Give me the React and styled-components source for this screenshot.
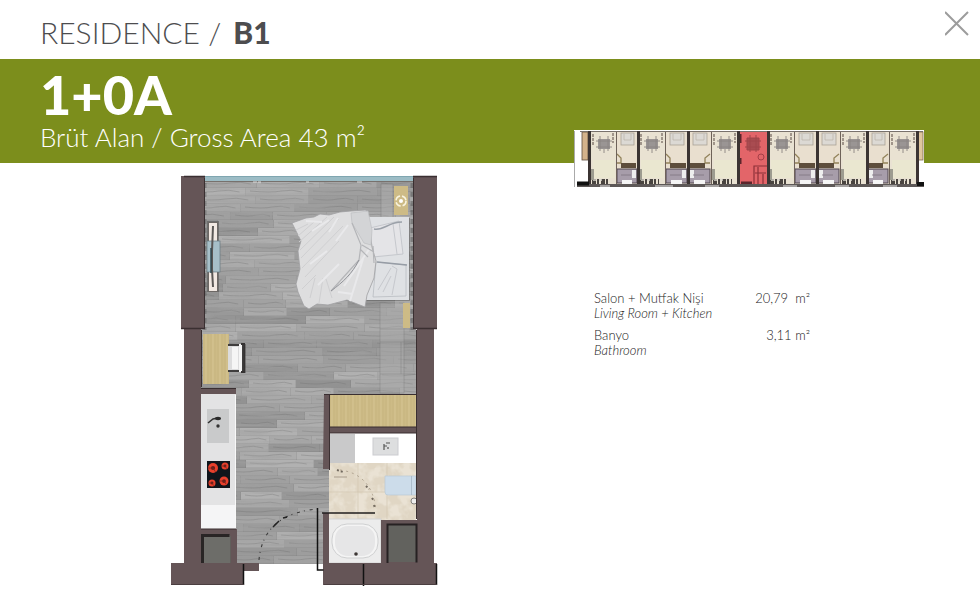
import React from "react";
import styled, { createGlobalStyle } from "styled-components";

const GlobalStyle = createGlobalStyle`
  *, *::before, *::after { box-sizing: border-box; }
  body { margin: 0; background: #fff; overflow-x: hidden; }
  body, button, table { font-family: "Lato", "Liberation Sans", sans-serif; }
`;

const Page = styled.div`
  color: #4a4a4c;
`;

const TopBar = styled.header`
  display: flex;
  align-items: flex-start;
  justify-content: space-between;
  padding: 8px 7px 0 40px;
  height: 59px;
`;

const Crumb = styled.p`
  margin: 4px 0 0;
  font-size: 30px;
  line-height: 40px;
  font-weight: 300;
  color: #4d4d4f;
  white-space: nowrap;

  b { font-weight: 900; margin-left: 4px; }
`;

const CloseButton = styled.button`
  display: flex;
  padding: 0 4px;
  border: 0;
  background: none;
  cursor: pointer;
`;

const Columns = styled.div`
  display: grid;
  grid-template-columns: minmax(0, 1fr) 406px;
`;

const Banner = styled(Columns)`
  background: #7c8e1c;
  color: #fff;
  height: 104px;
`;

const BannerText = styled.div`
  padding: 3px 0 0 40px;
  white-space: nowrap;
`;

const UnitName = styled.h1`
  margin: 0;
  font-size: 54px;
  line-height: 66px;
  font-weight: 900;
`;

const GrossArea = styled.p`
  margin: -7px 0 0;
  font-size: 26px;
  line-height: 32px;
  font-weight: 300;
`;

const KeyPlan = styled.svg`
  display: block;
  align-self: end;
  width: 350px;
  margin-bottom: -25px;
`;

const Details = styled(Columns)`
  padding-top: 12px;
`;

const PlanArea = styled.div`
  padding-left: 170px;
`;

const FloorPlan = styled.svg`
  display: block;
  width: 100%;
  max-width: 268px;
`;

const Rooms = styled.table`
  align-self: start;
  justify-self: start;
  width: 216px;
  margin: 116px 0 0 20px;
  border-collapse: collapse;
  font-size: 13px;
  line-height: 15px;
  font-weight: 300;
  white-space: nowrap;
  color: #222;

  th, td { padding: 0 0 7px; vertical-align: top; }
  th { text-align: left; font-weight: 300; }
  td { text-align: right; white-space: pre; }
  i { display: block; }
`;

const WALL = "#655557";
const EDGE = "#3a2f31";
const WOOD = "#cdbb86";

const seeded = (seed) => () => {
  seed = (seed * 16807) % 2147483647;
  return seed / 2147483647;
};

const random = seeded(4711);
const planks = [];
for (let y = 180; y < 566; y += 8) {
  let x = 196 - Math.floor(random() * 40);
  while (x < 420) {
    const w = 40 + Math.floor(random() * 34);
    const g = 146 + Math.floor(random() * 32);
    planks.push({ x, y, w, fill: `rgb(${g},${g},${g})` });
    x += w;
  }
}

function WoodFloor() {
  return (
    <g clipPath="url(#floor)">
      {planks.map((p, i) => (
        <g key={i}>
          <rect x={p.x} y={p.y} width={p.w} height="8" fill={p.fill} />
          <path
            d={`M${p.x} ${p.y + 8}h${p.w}v-8M${p.x + 4} ${p.y + 3}q${p.w / 3} 2 ${p.w / 2} 0t${p.w / 3} 1`}
            fill="none" stroke="#6c6c6c" strokeWidth=".8" opacity=".4"
          />
        </g>
      ))}
      <rect x="200" y="178" width="220" height="390" filter="url(#grain)" opacity=".5" />
      <g opacity=".5" stroke="#777" strokeWidth=".7">
        <rect x="381" y="184" width="12" height="34" fill="#b0b0b0" />
        <rect x="380" y="303" width="24" height="90" fill="#acacac" />
        <path d="M380 329h35M380 342h35M380 374h35M401 342v32" />
      </g>
    </g>
  );
}

function Bed() {
  return (
    <g>
      <rect x="345" y="218" width="65" height="83" fill="#555" opacity=".5" />
      <rect x="345" y="217" width="64" height="83" fill="#dfe1e4" />
      <path d="M370 228l29-7 4 33-30 3z" fill="#e4e4e7" stroke="#b9bcc2" strokeWidth=".7" />
      <path d="M374 229c10 2 14-7 28-7" fill="none" stroke="#9aa0a8" strokeWidth="1.4" />
      <path d="M376 262l30 3v31l-33 1z" fill="#dfe1e4" stroke="#b9bcc2" strokeWidth=".8" />
      <path d="M377 262l30 3" stroke="#969ca5" strokeWidth="1.5" />
      <path d="M393 224l4 30M392 266l5 3-5 26M378 290l13-22M383 292l8-16" fill="none" stroke="#c6c8cd" />
      <path
        d="M292 223l14-5 8-1 6-3 9 1 11-3 11-1 15-1 4 23 2 14 4 14-2 17-7 17-2 12-18-7-19 5-11-1-8 5-5-3-6-14-2-8 4-15-2-18 3-10z"
        fill="#dededf" stroke="#a0a0a2" strokeWidth=".8"
      />
      <path d="M351 213l17-2 4 19-1 15-7-2-12-20z" fill="#d3d4d6" stroke="#bdbec1" strokeWidth=".7" />
      <path
        d="M296 230l12-6M298 236l16-14M299 242l28-25M300 250l34-33M301 258l38-39M302 268l41-42M305 277l34-36M302 289l14-14M310 298l5-20M319 303l4-25M332 298l-6-19"
        stroke="#cfcfd1" strokeWidth="1"
      />
      <path
        d="M306 221l16 1M312 231l17-11M329 232l9-14M336 241l12-16M310 264l17-13M318 285l21-21M344 286l26-38M350 301l13-42M338 292l15 2"
        stroke="#e9e9eb" strokeWidth="2"
      />
      <path d="M331 291l28-31 2-15-9-22M362 245l12 7M360 249l8 8M373 246l1 17" fill="none" stroke="#b4b5b8" strokeWidth="1.2" />
      <path d="M331 291c12-9 21-17 28-31" fill="none" stroke="#909298" strokeWidth="1" />
    </g>
  );
}

function Kitchen() {
  const burners = [[213, 468, 5], [225, 466, 3.5], [212, 483, 3.5], [224, 481, 4.5]];
  return (
    <g>
      <rect x="201" y="394" width="35" height="135" fill="#e3e3e4" />
      <rect x="201" y="505" width="35" height="24" fill="#f5f5f6" />
      <path d="M235.500 395v134" stroke="#f8f8f8" strokeWidth="1" />
      <rect x="207" y="409" width="22" height="34" fill="#c9cacb" />
      <path d="M208 423l5-4 5-1" fill="none" stroke="#333" strokeWidth="1.6" />
      <ellipse cx="218" cy="418.500" rx="3" ry="1.700" fill="#292929" />
      <circle cx="218" cy="426" r="1.700" fill="#333" />
      <rect x="207" y="461" width="23" height="27" fill="#10151b" />
      {burners.map(([x, y, r]) => (
        <g key={`${x}-${y}`}>
          <circle cx={x} cy={y} r={r} fill="#e8402c" />
          <circle cx={x} cy={y} r={r / 2.4} fill="#64201c" />
          <path d={`M${x - r} ${y}h${r}l${r / 2} ${r / 1.3}`} fill="none" stroke="#7d241d" strokeWidth=".8" />
        </g>
      ))}
    </g>
  );
}

function Bathroom() {
  return (
    <g>
      <rect x="329" y="432" width="87" height="90" fill="#e0d6c4" />
      <rect x="329" y="432" width="87" height="90" filter="url(#stone)" opacity=".35" />
      <path d="M329 492h87M358 463v56M387 463v56" stroke="#d3c7b2" strokeWidth=".7" />
      <rect x="329" y="433" width="87" height="30" fill="#fff" />
      <rect x="330" y="434" width="25" height="29" fill="#c9c9ca" />
      <rect x="373" y="438" width="25" height="17" fill="#dddedf" stroke="#cbccd0" />
      <path d="M384 450v-6M386 443h4M384 446h3M388 447v2" fill="none" stroke="#555" strokeWidth="1.2" />
      <path d="M385 476h31v19h-28q-3 0-3-3z" fill="#ccdcea" stroke="#b9c8d6" strokeWidth=".7" />
      <path d="M411.500 476v19" stroke="#a3b5c4" strokeWidth=".8" />
      <circle cx="414" cy="501" r="3" fill="#eee" stroke="#82817e" />
      <path d="M334 477h13" stroke="#a89b8b" />
      <path d="M337 470l6 2M366 486l3 3M372 498l2 3M374 505l1 3" stroke="#71695f" strokeWidth="2" strokeDasharray="2 2" />
      <path d="M340 470q32 4 36 40" fill="none" stroke="#a59886" strokeWidth=".9" strokeDasharray="2 4" />
      <rect x="328" y="519" width="53" height="44" fill="#ececec" stroke="#d4d4d4" />
      <rect x="332" y="524" width="46" height="34" rx="15" fill="#f4f4f4" stroke="#cfd0d1" />
      <rect x="335" y="526" width="40" height="30" rx="13" fill="#e6e6e7" />
      <circle cx="356" cy="554" r="1.800" fill="#3d3735" />
    </g>
  );
}

function ApartmentPlan() {
  return (
    <FloorPlan viewBox="170 175 268 411" role="img" aria-label="1+0A apartment floor plan">
      <defs>
        <clipPath id="floor"><path d="M200 180h216v214h-87v170h-93v-170h-36z" /></clipPath>
        <filter id="grain" x="0" y="0" width="100%" height="100%">
          <feTurbulence type="fractalNoise" baseFrequency=".018 .32" numOctaves="3" seed="8" />
          <feColorMatrix values="0 0 0 0 .36  0 0 0 0 .36  0 0 0 0 .36  4 0 0 0 -1.8" />
        </filter>
        <filter id="stone" x="0" y="0" width="100%" height="100%">
          <feTurbulence type="fractalNoise" baseFrequency=".09" numOctaves="3" seed="3" />
          <feColorMatrix values="0 0 0 0 .98  0 0 0 0 .96  0 0 0 0 .9  4 0 0 0 -1.6" />
        </filter>
        <pattern id="oak" width="7" height="6" patternUnits="userSpaceOnUse">
          <rect width="7" height="6" fill={WOOD} />
          <path d="M1 0v6M5 0v6" stroke="#c6b27c" strokeWidth=".7" />
          <path d="M3 0v6" stroke="#d5c594" strokeWidth=".8" />
        </pattern>
      </defs>

      <WoodFloor />
      <rect x="205" y="176" width="208" height="5" fill="#9cbcc5" />
      <path d="M205 181.500h208" stroke="#77716d" />
      <path d="M205 176.500h208" stroke="#7fa6b0" />
      <path d="M253 182h4M258 182h3M306 182h3M357 182h5" stroke="#ddd" />

      <path d="M205 183v147" stroke="#444" strokeWidth="3" opacity=".35" strokeDasharray="5 4" />
      <path d="M412 183v147" stroke="#444" strokeWidth="3" opacity=".4" strokeDasharray="5 4" />

      <rect x="207" y="221" width="12" height="71" fill="#555" opacity=".6" />
      <rect x="208.500" y="222.500" width="9" height="69" fill="#f2e9e3" stroke="#6d6865" />
      <rect x="207" y="241" width="13" height="31" fill="#a6bfc8" stroke="#647981" strokeWidth=".7" />
      <path d="M213 226l-1 25v18l1 18" fill="none" stroke="#5a5755" strokeWidth="2" />
      <path d="M211 248v25" stroke="#2d454d" strokeWidth="1.4" />

      <rect x="394" y="186" width="14" height="29" fill={WOOD} />
      <circle cx="401" cy="201" r="5" fill="none" stroke="#f8f3df" strokeWidth="1.6" strokeDasharray="6 2" />
      <circle cx="401" cy="201" r="2" fill="#fff" />
      <rect x="403" y="303" width="7" height="25" fill={WOOD} />
      <Bed />

      <rect x="203" y="334" width="26" height="50" fill="url(#oak)" />
      <path d="M228 345h15v26h-15" fill="#dcdcdd" stroke="#3f3d3d" strokeWidth="2" />
      <rect x="232" y="347" width="6" height="22" fill="#f5f5f5" />
      <path d="M239 344h3v28h-3z" fill="#f5f5f5" />
      <path d="M244.500 344v29M241 344h4M241 372h4" stroke="#353232" strokeWidth="1.8" />

      <Kitchen />
      <Bathroom />
      <rect x="330" y="394" width="86" height="33" fill="url(#oak)" />

      <g fill={WALL}>
        <rect x="181" y="176" width="24" height="153" />
        <rect x="184" y="329" width="17" height="236" />
        <rect x="413" y="176" width="24" height="153" />
        <rect x="417" y="329" width="17" height="236" />
        <rect x="201" y="388" width="35" height="6" />
        <path d="M201 529h36v34h22v8h-15v14h-73v-22h30z" />
        <path d="M324 394h6v33h87v6h-88v36h-6z" />
        <path d="M323 513h6v50h52v-43h36v43h20v22H323z" />
      </g>
      <path d="M181 328.500h24M413 328.500h24M184 176.500h21M413 176.500h24" stroke={EDGE} strokeWidth="1.500" />
      <path d="M201.500 330v57M416.500 330v189M204.500 178v150M413.500 178v150M201 388.500h35M201 529h35M329.500 394v76M324 394.500h92M329 433h87M330 427h87" fill="none" stroke={EDGE} />
      <rect x="202" y="535" width="28" height="28" fill="#6d6d69" />
      <path d="M202.500 563v-27.500h27" fill="none" stroke="#292525" strokeWidth="3" />
      <path d="M230.500 536v27" stroke="#615f5b" />
      <rect x="388" y="525" width="28" height="37" fill="#62625e" />
      <path d="M387.500 563v-38.500h29v38" fill="none" stroke="#262122" strokeWidth="2" />
      <path d="M243.500 564v21M363.500 564v22M436.500 564v21" stroke="#111" strokeWidth="1.5" />
      <path d="M171 584.500h73M324 584.500h113" stroke="#4b3e40" />

      <path d="M317.500 508v62h6" fill="none" stroke="#111" strokeWidth="1.5" />
      <path d="M322 513h53" stroke="#211e1e" strokeWidth="1.5" />
      <path d="M259 560q4-46 58-51" fill="none" stroke="#3b3b3b" strokeWidth="1.1" strokeDasharray="3 4 1 5" />
      <path d="M273 527l6-6M283 518l4-1" stroke="#222" strokeWidth="1.5" />
    </FloorPlan>
  );
}

const bays = [
  { x: 590, w: 26, living: true },
  { x: 616, w: 22, lift: true },
  { x: 638, w: 27, living: true },
  { x: 665, w: 23, lift: true },
  { x: 688, w: 23 },
  { x: 711, w: 27, living: true },
  { x: 768, w: 26, living: true },
  { x: 794, w: 23, lift: true },
  { x: 817, w: 23 },
  { x: 840, w: 27, living: true },
  { x: 867, w: 22 },
  { x: 889, w: 28, living: true },
];

function LivingBay({ x, w }) {
  return (
    <g>
      <rect x={x} y="132" width={w} height="53" fill="#e9e2d2" />
      <rect x={x + 3} y="160" width={w - 4} height="18" fill="#eae7d0" />
      <rect x={x + 8} y="139" width="12" height="10" fill="#9a9594" />
      <path d={`M${x + 6} 141h16M${x + 6} 147h16M${x + 10} 136v15M${x + 18} 136v15M${x + 14} 149v4`} stroke="#8a8381" strokeWidth=".9" />
      <path d={`M${x + 3} 134v12M${x + w - 3} 133v10`} stroke="#a0958a" strokeWidth="2" strokeDasharray="3 1" />
      <path d={`M${x + 2} 181.500h${w - 8}`} stroke="#494440" strokeWidth="5" strokeDasharray="4 1 2 2" />
      <path d={`M${x + 3} 180h${w - 14}`} stroke="#d8d5cc" strokeWidth="1.5" strokeDasharray="3 3" />
      <rect x={x + 1} y="169" width="3" height="11" fill="#9d9c90" />
    </g>
  );
}

function BedBay({ x, w, lift }) {
  return (
    <g>
      <rect x={x} y="132" width={w} height="53" fill="#e9dfcf" />
      <rect x={x + 5} y="133" width={w - 9} height="12" fill="#dcd9d4" stroke="#aaa296" strokeWidth=".8" />
      <path d={`M${x + 8} 134v6h${w - 15}v-6`} fill="none" stroke="#bcb6ac" strokeWidth=".8" />
      <path d={lift ? `M${x + 1} 154l4 4v5h-5` : `M${x + w - 1} 154l-5 4v5h5`} fill="none" stroke="#92825a" strokeWidth="1.3" />
      <rect x={lift ? x + 5 : x + 1} y="163" width={w - 7} height="5" fill="#5d4d3c" />
      <rect x={x + 1} y="169" width={w - 2} height="14" fill="#a79daa" stroke="#504750" />
      <rect x={lift ? x + w - 6 : x + 2} y="170" width="4" height="8" fill="#eee" />
      <rect x={x + 6} y="180" width={w - 12} height="4" fill="#f5f5f5" />
      <path d={`M${x + 5} 175h${w - 12}`} stroke="#7e7481" strokeWidth=".8" />
    </g>
  );
}

function BlockKeyPlan() {
  return (
    <KeyPlan viewBox="574 130 350 58" role="img" aria-label="Position of 1+0A in block B1">
      <rect x="574" y="130" width="350" height="58" fill="#fff" />
      <rect x="582" y="132" width="6" height="28" fill="#d3b28b" stroke="#5e4c3e" strokeWidth=".8" />
      <rect x="918" y="132" width="5" height="28" fill="#dfc69f" stroke="#806b52" strokeWidth=".8" />
      {bays.map((bay) => (bay.living ? <LivingBay key={bay.x} {...bay} /> : <BedBay key={bay.x} {...bay} />))}
      <rect x="738" y="132" width="30" height="53" fill="#e36569" />
      <path d="M747 138h12v12h-12zM745 141h16M745 147h16M750 135v17M756 135v17" fill="#a94c51" stroke="#a0454b" />
      <circle cx="761" cy="157" r="3" fill="none" stroke="#a63f47" />
      <path d="M754 185v-19h13M755 173h11M758 167v17M763 174v10" fill="none" stroke="#8d3039" strokeWidth="1.2" />
      <path d="M740 134v9M740 158v6M741 183h11" stroke="#5c252b" strokeWidth="3" />
      <path d="M580 131.500h343" stroke="#78716c" />
      {[589, 638, 688, 738, 768, 817, 867, 917].map((x) => (
        <rect key={x} x={x - 1} y="131" width="3" height="55" fill="#3b3433" />
      ))}
      {[616, 665, 711, 794, 840, 889].map((x) => (
        <rect key={x} x={x} y="132" width="1" height="53" fill="#6e6259" />
      ))}
      <rect x="577" y="184" width="347" height="3" fill="#5d5857" />
      <path d="M577 183.500h12M917 184h7" stroke="#111" strokeWidth="4" />
      <path d="M600 186h10M655 186h18M705 186h14M783 186h14M835 186h14M883 186h14" stroke="#a5a2a1" strokeWidth="2" />
      <path d="M574.500 131v56" stroke="#aaa" />
    </KeyPlan>
  );
}

const rooms = [
  { name: "Salon + Mutfak Nişi", english: "Living Room + Kitchen", area: "20,79  m²" },
  { name: "Banyo", english: "Bathroom", area: "3,11 m²" },
];

export default function App() {
  return (
    <Page>
      <GlobalStyle />
      <TopBar>
        <Crumb>RESIDENCE / <b>B1</b></Crumb>
        <CloseButton type="button" aria-label="Close">
          <svg width="24" height="30" viewBox="0 0 24 30" fill="none" stroke="#9c9c9c" strokeWidth="2">
            <path d="M0 4l23 23M23 4L0 27" />
          </svg>
        </CloseButton>
      </TopBar>
      <Banner as="section">
        <BannerText>
          <UnitName>1+0A</UnitName>
          <GrossArea>Brüt Alan / Gross Area 43 m²</GrossArea>
        </BannerText>
        <BlockKeyPlan />
      </Banner>
      <Details as="main">
        <PlanArea><ApartmentPlan /></PlanArea>
        <Rooms>
          <tbody>
            {rooms.map((room) => (
              <tr key={room.name}>
                <th scope="row">{room.name}<i lang="en">{room.english}</i></th>
                <td>{room.area}</td>
              </tr>
            ))}
          </tbody>
        </Rooms>
      </Details>
    </Page>
  );
}
